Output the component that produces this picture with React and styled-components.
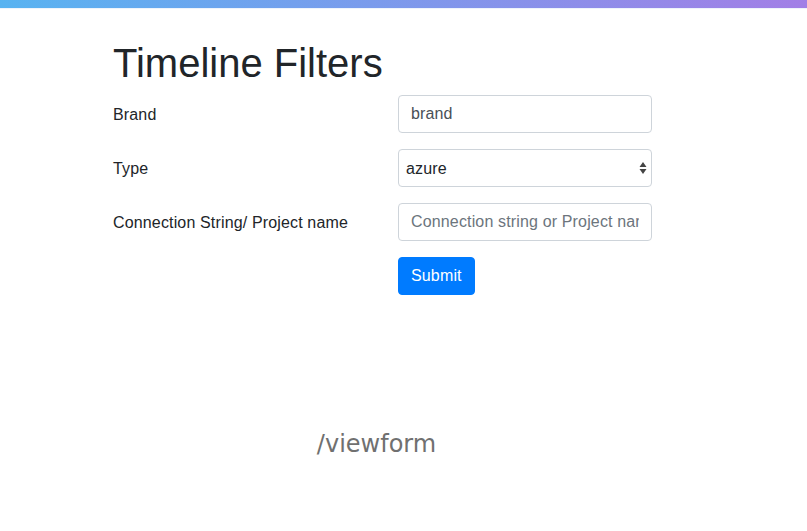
import React from 'react';
import styled, { createGlobalStyle } from 'styled-components';

const GlobalStyle = createGlobalStyle`
  body {
    margin: 0;
    background: #fff;
    font-family: "Liberation Sans", Arial, sans-serif;
    color: #212529;
  }
`;

const TopBar = styled.div`
  height: 8px;
  background: linear-gradient(to right, #58b3f1, #a27fe6);
  box-shadow: 0 1px 0 #eef4fb;
`;

const Page = styled.main`
  padding: 31px 0 0 113px;
`;

const Title = styled.h1`
  margin: 0 0 8px;
  font-size: 40px;
  font-weight: 500;
  line-height: 48px;
  color: #212529;
`;

const Form = styled.form`
  display: flex;
  flex-direction: column;
  gap: 16px;
  width: 539px;
`;

const Row = styled.div`
  display: grid;
  grid-template-columns: 285px 254px;
  align-items: center;
`;

const Label = styled.label`
  font-size: 16px;
  line-height: 24px;
  letter-spacing: 0.15px;
  padding-top: 1px;
`;

const Input = styled.input`
  box-sizing: border-box;
  width: 100%;
  height: 38px;
  padding: 6px 12px;
  border: 1px solid #ced4da;
  border-radius: 4px;
  font-family: inherit;
  font-size: 16px;
  letter-spacing: 0.15px;
  color: #495057;
  outline: none;

  &::placeholder {
    color: #6c757d;
  }
`;

const SelectWrap = styled.div`
  position: relative;
`;

const Select = styled.select`
  box-sizing: border-box;
  width: 100%;
  height: 38px;
  padding: 6px 24px 6px 7px;
  border: 1px solid #ced4da;
  border-radius: 4px;
  background: #fff;
  font-family: inherit;
  font-size: 16px;
  letter-spacing: 0.15px;
  color: #212529;
  appearance: none;
  outline: none;
`;

const Arrows = styled.svg`
  position: absolute;
  right: 4px;
  top: 12px;
  pointer-events: none;
`;

const Button = styled.button`
  box-sizing: border-box;
  height: 38px;
  padding: 6px 12px;
  border: 1px solid #007bff;
  border-radius: 4px;
  background: #007bff;
  color: #fff;
  font-family: inherit;
  font-size: 16px;
  letter-spacing: 0.15px;
  cursor: pointer;
`;

const Path = styled.div`
  width: 527px;
  margin-top: 135px;
  text-align: center;
  font-family: "DejaVu Sans", Verdana, sans-serif;
  font-size: 24px;
  color: #707070;
`;

export default function App() {
  return (
    <>
      <GlobalStyle />
      <TopBar />
      <Page>
        <Title>Timeline Filters</Title>
        <Form onSubmit={e => e.preventDefault()}>
          <Row>
            <Label>Brand</Label>
            <Input defaultValue="brand" />
          </Row>
          <Row>
            <Label>Type</Label>
            <SelectWrap>
              <Select defaultValue="azure">
                <option value="azure">azure</option>
              </Select>
              <Arrows width="10" height="14" viewBox="0 0 10 14">
                <path d="M5 1 L8.5 6 H1.5 Z M5 13 L1.5 8 H8.5 Z" fill="#444" />
              </Arrows>
            </SelectWrap>
          </Row>
          <Row>
            <Label>Connection String/ Project name</Label>
            <Input placeholder="Connection string or Project name" />
          </Row>
          <Row>
            <span />
            <div>
              <Button type="submit">Submit</Button>
            </div>
          </Row>
        </Form>
        <Path>/viewform</Path>
      </Page>
    </>
  );
}
